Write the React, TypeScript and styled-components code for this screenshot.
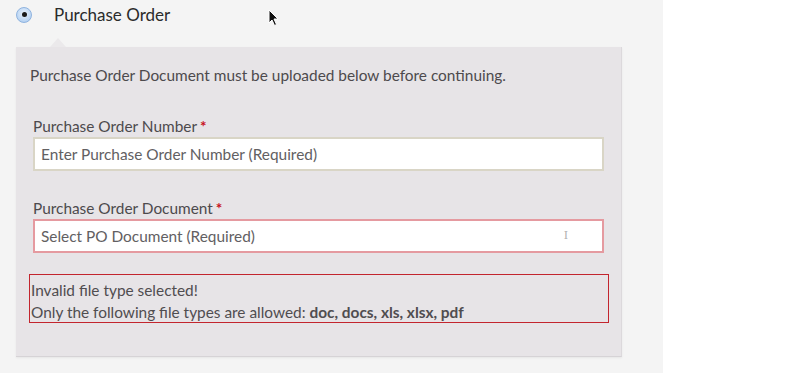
import React from "react";
import styled, { createGlobalStyle } from "styled-components";

const Global = createGlobalStyle`
  html, body { margin: 0; padding: 0; }
  body {
    background: #ffffff;
    font-family: "Lato", "Open Sans", sans-serif;
    color: #4d4a4d;
  }
`;

const Page = styled.div`
  display: flex;
  width: 793px;
  height: 373px;
  overflow: hidden;
`;

const Main = styled.div`
  position: relative;
  width: 663px;
  height: 373px;
  background: #f4f4f4;
  box-sizing: border-box;
  padding-left: 16px;
`;

const Side = styled.div`
  flex: 1;
  background: #ffffff;
`;

const OptionRow = styled.div`
  display: flex;
  align-items: center;
  height: 29px;
`;

const Radio = styled.span`
  width: 16px;
  height: 16px;
  box-sizing: border-box;
  border-radius: 50%;
  border: 1px solid #8fb3df;
  background: radial-gradient(circle at 50% 40%, #eaf3fd 0%, #b9d4f3 70%, #9cc0ec 100%);
  display: flex;
  align-items: center;
  justify-content: center;
  &::after {
    content: "";
    width: 5px;
    height: 5px;
    border-radius: 50%;
    background: #1a1a1a;
  }
`;

const OptionLabel = styled.span`
  margin-left: 22px;
  font-size: 17px;
  color: #2b2b2b;
`;

const Panel = styled.div`
  position: relative;
  margin-top: 18px;
  width: 606px;
  height: 310px;
  box-sizing: border-box;
  background: #e7e4e7;
  border-right: 1px solid #dcd9dc;
  border-bottom: 1px solid #d6d3d6;
  box-shadow: 0 1px 2px rgba(0, 0, 0, 0.06);
  padding: 18px 17px 0 14px;
  &::before {
    content: "";
    position: absolute;
    top: -9px;
    left: 34px;
    border-left: 8px solid transparent;
    border-right: 8px solid transparent;
    border-bottom: 9px solid #ebe9eb;
  }
`;

const Intro = styled.p`
  margin: 0;
  font-size: 15.4px;
  line-height: 20px;
`;

const Field = styled.div<{ $top: number }>`
  margin-left: 3px;
  margin-top: ${(p) => p.$top}px;
`;

const Label = styled.div`
  font-size: 15.4px;
  line-height: 18px;
  margin-bottom: 2px;
`;

const Star = styled.span`
  color: #c8101c;
  font-weight: 700;
  margin-left: 3px;
`;

const Input = styled.div<{ $error?: boolean }>`
  position: relative;
  height: 34px;
  box-sizing: border-box;
  background: #ffffff;
  border: 2px solid ${(p) => (p.$error ? "#e59aa0" : "#d9d5c6")};
  display: flex;
  align-items: center;
  padding-left: 6px;
  font-size: 15.4px;
  color: #626062;
`;

const IBeam = styled.span`
  position: absolute;
  right: 34px;
  top: 8px;
  font-family: "DejaVu Serif", serif;
  font-size: 11px;
  color: #b0b0b0;
`;

const ErrorBox = styled.div`
  margin-top: 21px;
  margin-left: -1px;
  width: 580px;
  height: 49px;
  box-sizing: border-box;
  border: 1px solid #c3252e;
  padding: 4px 0 0 1px;
  font-size: 15.4px;
  line-height: 22px;
  color: #504d50;
  b { font-weight: 700; }
`;

const Cursor = styled.svg`
  position: absolute;
  left: 268px;
  top: 9px;
`;

export default function App() {
  return (
    <>
      <Global />
      <Page>
        <Main>
          <OptionRow>
            <Radio />
            <OptionLabel>Purchase Order</OptionLabel>
          </OptionRow>
          <Panel>
            <Intro>Purchase Order Document must be uploaded below before continuing.</Intro>
            <Field $top={32}>
              <Label>
                Purchase Order Number<Star>*</Star>
              </Label>
              <Input>Enter Purchase Order Number (Required)</Input>
            </Field>
            <Field $top={28}>
              <Label>
                Purchase Order Document<Star>*</Star>
              </Label>
              <Input $error>
                Select PO Document (Required)
                <IBeam>I</IBeam>
              </Input>
            </Field>
            <ErrorBox>
              Invalid file type selected!
              <br />
              Only the following file types are allowed: <b>doc, docs, xls, xlsx, pdf</b>
            </ErrorBox>
          </Panel>
          <Cursor width="12" height="18" viewBox="0 0 12 18">
            <path d="M1 1 L1 14 L4 11 L6.5 16.5 L8.5 15.5 L6 10 L10 10 Z" fill="#111" stroke="#fff" strokeWidth="1" />
          </Cursor>
        </Main>
        <Side />
      </Page>
    </>
  );
}
